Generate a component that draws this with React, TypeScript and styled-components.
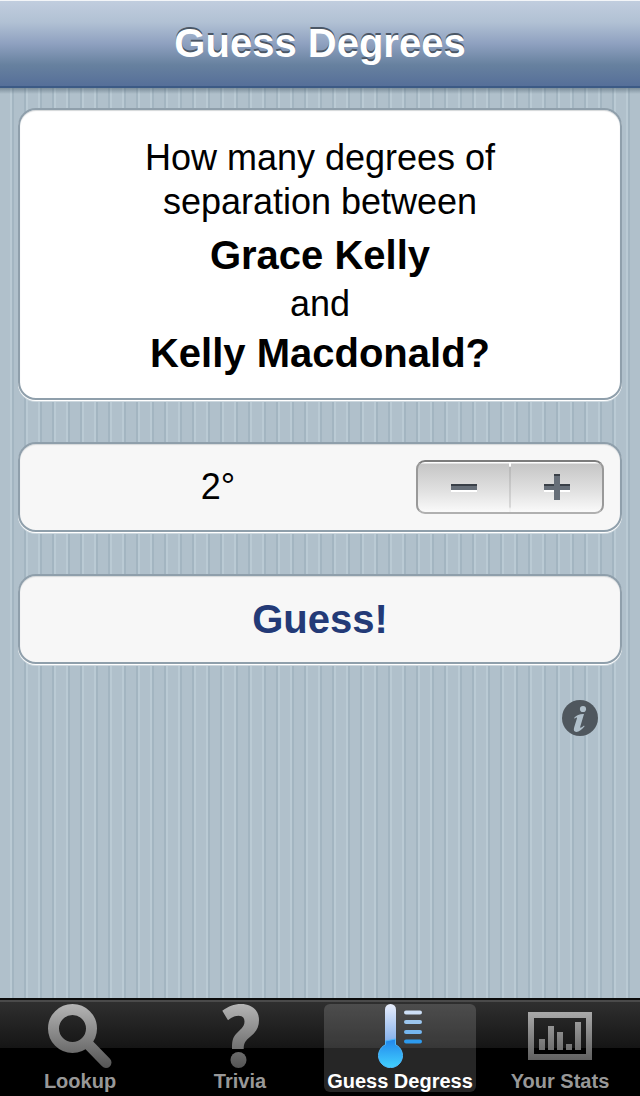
import React, { useState } from "react";
import styled, { createGlobalStyle } from "styled-components";

const Global = createGlobalStyle`
  * { box-sizing: border-box; }
  html, body, #root { height: 100%; }
  body { margin: 0; font-family: "Liberation Sans", Helvetica, Arial, sans-serif; color: #000; }
  button { font-family: inherit; margin: 0; padding: 0; border: 0; background: none; cursor: pointer; }
`;

const Page = styled.div`
  display: flex;
  flex-direction: column;
  min-height: 100%;
  background: #b0c0cb;
`;

const Header = styled.header`
  height: 88px;
  flex: none;
  display: flex;
  align-items: center;
  justify-content: center;
  padding-bottom: 2px;
  border-top: 1px solid #f3f5f8;
  border-bottom: 2px solid #3c5a85;
  background: linear-gradient(#c1cdde 0%, #b1c1d4 25%, #8fa1c0 50%, #67819f 75%, #566f99 100%);
`;

const Title = styled.h1`
  margin: 0;
  font-size: 40px;
  line-height: 46px;
  font-weight: bold;
  color: #fff;
  text-shadow: 0 -2px 0 #4b5766;
`;

const Main = styled.main`
  flex: 1;
  display: flex;
  flex-direction: column;
  gap: 42px;
  padding: 20px 18px;
  background:
    linear-gradient(rgba(60, 80, 95, 0.45), rgba(60, 80, 95, 0) 6px),
    repeating-linear-gradient(
      90deg,
      #b0c0cb 0 10px,
      #bacad4 10px 12px,
      #a3b5c1 12px 14px,
      #b0c0cb 14px 24px,
      #a3b5c1 24px 26px,
      #bacad4 26px 28px
    );
`;

const Card = styled.section<{ $white?: boolean }>`
  border: 2px solid #8f9fab;
  border-radius: 18px;
  background: ${(p) => (p.$white ? "#fff" : "#f7f7f7")};
  box-shadow: 0 1px 0 #fff, 0 2px 0 #ccd7de, inset 0 1px 1px #d4d7d9;
`;

const Question = styled(Card)`
  padding: 26px 20px 18px;
  text-align: center;
  font-size: 36px;
  line-height: 44px;
`;

const Line = styled.p`
  margin: 0;

  &:first-child { margin-bottom: 4px; }
`;

const Name = styled.strong`
  display: block;
  font-size: 40px;
  line-height: 54px;
`;

const StepperCard = styled(Card)`
  height: 90px;
  display: flex;
  align-items: center;
  padding-right: 16px;
`;

const Value = styled.output`
  flex: 1;
  text-align: center;
  font-size: 36px;
  line-height: 44px;
`;

const Stepper = styled.div`
  display: flex;
  width: 188px;
  height: 54px;
  border: 2px solid;
  border-color: #7d7d7d #999 #b0b0b0;
  border-radius: 9px;
  background: linear-gradient(#fff 0 1px, #c6c6c6 2px, #e2e2e2 60%, #fafafa);
`;

const StepButton = styled.button`
  flex: 1;
  display: flex;
  align-items: center;
  justify-content: center;

  &:first-child {
    border-right: 2px solid;
    border-image: linear-gradient(#fff 0 5px, #b8b8b8 6px, #d8d8d8 44px, #f3f3f3 46px) 1;
  }
`;

const GuessButton = styled.button`
  display: block;
  width: 100%;
  height: 86px;
  color: #233a77;
  font-size: 40px;
  line-height: 46px;
  font-weight: bold;
`;

const InfoButton = styled.button`
  align-self: flex-end;
  width: 36px;
  height: 36px;
  margin: -6px 24px 0 0;
`;

const TabBar = styled.nav`
  flex: none;
  display: grid;
  grid-template-columns: repeat(4, 1fr);
  height: 98px;
  padding: 4px 0;
  border-top: 2px solid #0c0c0c;
  background: linear-gradient(#4a4a4a 0 2px, #2f2f2f 2px, #151515 48px, #000 48px);
`;

const Tab = styled.button<{ $active?: boolean }>`
  display: flex;
  flex-direction: column;
  align-items: center;
  margin: 0 4px;
  border-radius: 6px;
  background: ${(p) => (p.$active ? "rgba(255,255,255,0.15)" : "none")};
  color: ${(p) => (p.$active ? "#fff" : "#989898")};
  font-size: 20px;
  line-height: 22px;
  font-weight: bold;
  white-space: nowrap;

  svg { display: block; flex: none; margin-bottom: 2px; }
`;

const tabs = ["Lookup", "Trivia", "Guess Degress", "Your Stats"];

function TabIcon({ index }: { index: number }) {
  return (
    <svg width="72" height="64" viewBox="0 0 72 64" aria-hidden="true">
      <defs>
        <linearGradient id="grey" gradientUnits="userSpaceOnUse" x1="0" y1="0" x2="0" y2="64">
          <stop offset="0" stopColor="#b5b5b5" />
          <stop offset="1" stopColor="#545454" />
        </linearGradient>
        <linearGradient id="glass" gradientUnits="userSpaceOnUse" x1="0" y1="0" x2="0" y2="40">
          <stop offset="0" stopColor="#e8edfb" />
          <stop offset="1" stopColor="#7dacea" />
        </linearGradient>
        <linearGradient id="fluid" gradientUnits="userSpaceOnUse" x1="0" y1="36" x2="0" y2="64">
          <stop offset="0" stopColor="#2388ec" />
          <stop offset="1" stopColor="#42d2ff" />
        </linearGradient>
      </defs>
      {index === 0 && (
        <g fill="none" stroke="url(#grey)">
          <circle cx="28.5" cy="24.5" r="19" strokeWidth="11" />
          <path d="M43 39L62 58.5" strokeWidth="11" strokeLinecap="round" />
        </g>
      )}
      {index === 1 && (
        <g fill="url(#grey)">
          <path d="M18.300 6.800C24 2.500 30 0 37 0C48 0 55 6.500 55 16C55 23.500 52 28 46.500 32.500C41.500 36.500 39.700 39 39.700 45H28C28 37.500 28.500 34 32 30C36 25.500 40.500 23 40.500 17.500C40.500 13.500 38 11.700 34.500 11.700C31 11.700 27.500 13.500 24 16.300Z" />
          <circle cx="34.5" cy="56" r="8" />
        </g>
      )}
      {index === 2 && (
        <g>
          <path d="M21 5.500a5.500 5.500 0 0 1 11 0V42H21z" fill="url(#glass)" />
          <path d="M21.500 37L31.500 35V40.700A12 12 0 1 1 21.500 40.700Z" fill="url(#fluid)" stroke="#4eb8fb" strokeWidth="1" />
          <g strokeWidth="4" strokeLinecap="round">
            <path d="M42 8.500H56" stroke="#cddff6" />
            <path d="M42 18H56" stroke="#9cc6ee" />
            <path d="M42 28H56" stroke="#75b6ef" />
            <path d="M42 37.500H56" stroke="#2d9bef" />
          </g>
        </g>
      )}
      {index === 3 && (
        <g fill="url(#grey)">
          <path fillRule="evenodd" d="M4 8H68V56H4zM10 14V50H62V14z" />
          <path d="M15 35h6v11h-6zM24 22h6v24h-6zM33 28h6v18h-6zM42 40h6v6h-6zM51 18h6v28h-6z" />
        </g>
      )}
    </svg>
  );
}

export default function App() {
  const [degrees, setDegrees] = useState(2);
  const [active, setActive] = useState(2);

  return (
    <Page>
      <Global />
      <Header>
        <Title>Guess Degrees</Title>
      </Header>
      <Main>
        <Question $white>
          <Line>How many degrees of<br />separation between</Line>
          <Name>Grace Kelly</Name>
          <Line>and</Line>
          <Name>Kelly Macdonald?</Name>
        </Question>
        <StepperCard>
          <Value>{degrees}°</Value>
          <Stepper>
            <StepButton aria-label="Fewer degrees" onClick={() => setDegrees(Math.max(1, degrees - 1))}>
              <svg width="26" height="28" viewBox="0 0 26 28" aria-hidden="true">
                <path d="M0 17h26v2H0z" fill="#fff" />
                <path d="M0 11h26v6H0z" fill="#666e78" />
                <path d="M0 11h26v2H0z" fill="#3a4048" />
              </svg>
            </StepButton>
            <StepButton aria-label="More degrees" onClick={() => setDegrees(degrees + 1)}>
              <svg width="26" height="28" viewBox="0 0 26 28" aria-hidden="true">
                <path d="M0 17h26v2H0z" fill="#fff" />
                <path d="M10 1h6v26h-6zM0 11h26v6H0z" fill="#666e78" />
                <path d="M10 1h6v2h-6zM0 11h10v2H0zM16 11h10v2H16z" fill="#3a4048" />
              </svg>
            </StepButton>
          </Stepper>
        </StepperCard>
        <Card>
          <GuessButton>Guess!</GuessButton>
        </Card>
        <InfoButton aria-label="Information">
          <svg width="36" height="36" viewBox="0 0 36 36" aria-hidden="true">
            <circle cx="18" cy="18" r="18" fill="#4f575e" />
            <circle cx="21" cy="9" r="3.1" fill="#b0c0cb" />
            <path d="M12 18C14.500 15 18 13.800 22 14L18.300 26.500C17.800 28.500 19.500 28 22 25.600L22.600 26.300C20 29.800 17 31.900 14.300 31.900C12 31.900 11.300 30.200 12.200 27.300L15 18.300C15.400 16.900 14.200 17.200 12.600 18.600Z" fill="#b0c0cb" />
          </svg>
        </InfoButton>
      </Main>
      <TabBar>
        {tabs.map((label, i) => (
          <Tab key={label} $active={i === active} onClick={() => setActive(i)}>
            <TabIcon index={i} />
            {label}
          </Tab>
        ))}
      </TabBar>
    </Page>
  );
}
